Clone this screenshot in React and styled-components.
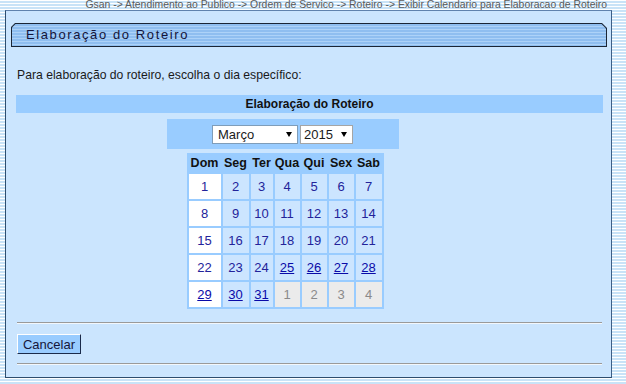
import React from 'react';
import styled, { createGlobalStyle } from 'styled-components';

const Global = createGlobalStyle`
  html, body { margin: 0; padding: 0; }
  body {
    font-family: "Liberation Sans", Arial, sans-serif;
    background: repeating-linear-gradient(to bottom, #ffffff 0px, #ffffff 1px, #c9e3f7 1px, #c9e3f7 3px);
    min-height: 384px;
    overflow: hidden;
  }
`;

const Page = styled.div`
  width: 607px;
  padding-left: 5px;
`;

const Breadcrumb = styled.div`
  height: 10px;
  line-height: 10px;
  font-size: 10.4px;
  color: #5a5a5a;
  text-align: right;
  padding-right: 5px;
  white-space: nowrap;
`;

const Panel = styled.div`
  background: #cbe5fe;
  border: 1px solid #2d4d6e;
  border-top-color: #5f82ad;
  border-right-color: #3d5f86;
  padding: 12px 4px 12px 5px;
`;

const TitleFrame = styled.div`
  height: 24px;
  box-sizing: border-box;
  padding: 1px;
  background: #1b2636;
  clip-path: polygon(4px 0, calc(100% - 5px) 0, 100% 5px, 100% 100%, 0 100%, 0 4px);
`;

const TitleInner = styled.div`
  height: 100%;
  background: repeating-linear-gradient(to bottom, #8fbef0 0px, #8fbef0 2px, #add2f8 2px, #add2f8 3px);
  clip-path: polygon(3.5px 0, calc(100% - 4.5px) 0, 100% 4.5px, 100% 100%, 0 100%, 0 3.5px);
  padding-left: 14px;
  font-size: 13px;
  letter-spacing: 1.6px;
  line-height: 22px;
  color: #14143a;
`;

const Intro = styled.div`
  margin-top: 21px;
  padding-left: 6px;
  font-size: 12.2px;
  line-height: 15px;
  color: #1a1a1a;
`;

const SectionHeader = styled.div`
  margin: 12px 4px 0 5px;
  height: 18px;
  line-height: 18px;
  background: #99ccff;
  font-size: 12px;
  font-weight: bold;
  text-align: center;
  color: #111;
`;

const CalendarArea = styled.div`
  margin: 0 4px 0 5px;
  padding-right: 54px;
  display: flex;
  flex-direction: column;
  align-items: center;
`;

const SelectBar = styled.div`
  margin-top: 6px;
  width: 232px;
  height: 30px;
  background: #99ccff;
  display: flex;
  align-items: center;
  justify-content: center;
  gap: 2px;
`;

const SelectWrap = styled.div`
  position: relative;
  width: ${(p) => p.$w}px;
  height: 19px;
`;

const Select = styled.select`
  appearance: none;
  -webkit-appearance: none;
  box-sizing: border-box;
  width: 100%;
  height: 100%;
  margin: 0;
  border: 1px solid ${(p) => (p.$focus ? '#7f9db9' : '#a5a5a5')};
  border-radius: 0;
  background: #fff;
  font-family: "Liberation Sans", Arial, sans-serif;
  font-size: 13px;
  color: #1a1a1a;
  padding: 0 0 0 ${(p) => p.$pl}px;
  outline: none;
`;

const Arrow = styled.svg`
  position: absolute;
  right: 6px;
  top: 7px;
  pointer-events: none;
`;

const Calendar = styled.div`
  margin: 4px 0 0 5px;
  display: grid;
  grid-template-columns: 32px 26px 22px 25px 25px 25px 26px;
  grid-auto-rows: 25px;
  grid-template-rows: 17px;
  gap: 2px;
  padding: 2px;
  background: #99ccff;
`;

const DayName = styled.div`
  font-size: 12.5px;
  font-weight: bold;
  color: #111;
  text-align: center;
  line-height: 17px;
  white-space: nowrap;
`;

const dayBg = { sunday: '#ffffff', week: '#cce5ff', other: '#ebebeb' };

const Day = styled.div`
  background: ${(p) => dayBg[p.$kind]};
  display: flex;
  align-items: center;
  justify-content: center;
  font-size: 13px;
  color: ${(p) => (p.$kind === 'other' ? '#8a8a8a' : p.$link ? '#0a0aa8' : '#23239a')};
  text-decoration: ${(p) => (p.$link ? 'underline' : 'none')};
  cursor: ${(p) => (p.$link ? 'pointer' : 'default')};
`;

const Rule = styled.hr`
  margin: ${(p) => p.$top}px 5px 0 6px;
  height: 0;
  border: 0;
  border-top: 1px solid #9a9a9a;
  border-bottom: 1px solid #f2f7fc;
`;

const Button = styled.button`
  margin: 10px 0 0 6px;
  width: 64px;
  height: 20px;
  box-sizing: border-box;
  padding: 0;
  background: #99ccff;
  border: 1px solid;
  border-color: #ffffff #1a2a4a #1a2a4a #ffffff;
  font-family: "Liberation Sans", Arial, sans-serif;
  font-size: 13px;
  color: #16163a;
  display: block;
`;

const names = ['Dom', 'Seg', 'Ter', 'Qua', 'Qui', 'Sex', 'Sab'];

function buildDays() {
  const cells = [];
  for (let d = 1; d <= 31; d++) {
    const col = (d - 1) % 7;
    cells.push({ label: d, kind: col === 0 ? 'sunday' : 'week', link: d >= 25 });
  }
  for (let d = 1; d <= 4; d++) cells.push({ label: d, kind: 'other', link: false });
  return cells;
}

const ArrowIcon = () => (
  <Arrow width="6" height="5" viewBox="0 0 6 5">
    <polygon points="0,0 6,0 3,5" fill="#000" />
  </Arrow>
);

export default function App() {
  const days = buildDays();
  return (
    <>
      <Global />
      <Page>
        <Breadcrumb>
          Gsan -&gt; Atendimento ao Publico -&gt; Ordem de Servico -&gt; Roteiro -&gt; Exibir Calendario para Elaboracao de Roteiro
        </Breadcrumb>
        <Panel>
          <TitleFrame>
            <TitleInner>Elaboração do Roteiro</TitleInner>
          </TitleFrame>
          <Intro>Para elaboração do roteiro, escolha o dia específico:</Intro>
          <SectionHeader>Elaboração do Roteiro</SectionHeader>
          <CalendarArea>
            <SelectBar>
              <SelectWrap $w={86}>
                <Select $pl={5} $focus defaultValue="3">
                  <option value="1">Janeiro</option>
                  <option value="2">Fevereiro</option>
                  <option value="3">Março</option>
                  <option value="4">Abril</option>
                  <option value="5">Maio</option>
                  <option value="6">Junho</option>
                  <option value="7">Julho</option>
                  <option value="8">Agosto</option>
                  <option value="9">Setembro</option>
                  <option value="10">Outubro</option>
                  <option value="11">Novembro</option>
                  <option value="12">Dezembro</option>
                </Select>
                <ArrowIcon />
              </SelectWrap>
              <SelectWrap $w={53}>
                <Select $pl={3} defaultValue="2015">
                  <option value="2014">2014</option>
                  <option value="2015">2015</option>
                  <option value="2016">2016</option>
                </Select>
                <ArrowIcon />
              </SelectWrap>
            </SelectBar>
            <Calendar>
              {names.map((n) => (
                <DayName key={n}>{n}</DayName>
              ))}
              {days.map((c, i) => (
                <Day key={i} $kind={c.kind} $link={c.link}>
                  {c.label}
                </Day>
              ))}
            </Calendar>
          </CalendarArea>
          <Rule $top={13} />
          <Button type="button">Cancelar</Button>
          <Rule $top={9} />
        </Panel>
      </Page>
    </>
  );
}
